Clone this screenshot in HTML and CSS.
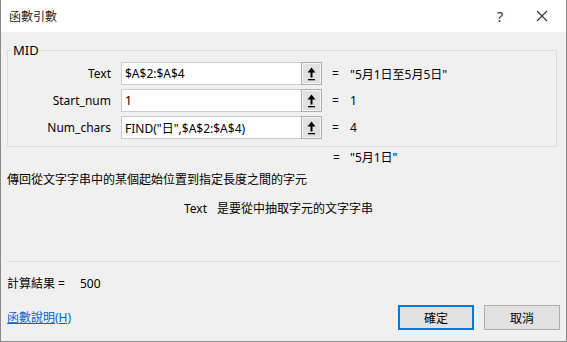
FILE: index.html
```html
<!DOCTYPE html>
<html lang="zh-Hant">
<head>
    <meta charset="utf-8">
    <title>函數引數</title>
    <link rel="stylesheet" href="styles.css">
</head>
<body>
<div class="window">
    <div class="titlebar">
        <span class="title">函數引數</span>
        <span class="help">?</span>
        <span class="close">
            <svg width="12" height="12" viewBox="0 0 12 12"><path d="M1 1L11 11M11 1L1 11" stroke="#333" stroke-width="1.1" fill="none"/></svg>
        </span>
    </div>

    <div class="content">
        <fieldset class="args">
            <legend>MID</legend>
            <div class="argRow">
                <label for="arg1">Text</label>
                <input type="text" id="arg1" value="$A$2:$A$4">
                <button class="collapse" type="button">
                    <svg width="9" height="14" viewBox="0 0 9 14"><path d="M4.5 0.5L8.5 5.5H5.5V10.5H3.5V5.5H0.5Z" fill="#000"/><rect x="1" y="12" width="7" height="1.3" fill="#000"/></svg>
                </button>
                <span class="eq">=</span>
                <span class="val">"5月1日至5月5日"</span>
            </div>
            <div class="argRow">
                <label for="arg2">Start_num</label>
                <input type="text" id="arg2" value="1">
                <button class="collapse" type="button">
                    <svg width="9" height="14" viewBox="0 0 9 14"><path d="M4.5 0.5L8.5 5.5H5.5V10.5H3.5V5.5H0.5Z" fill="#000"/><rect x="1" y="12" width="7" height="1.3" fill="#000"/></svg>
                </button>
                <span class="eq">=</span>
                <span class="val">1</span>
            </div>
            <div class="argRow">
                <label for="arg3">Num_chars</label>
                <input type="text" id="arg3" value='FIND("日",$A$2:$A$4)'>
                <button class="collapse" type="button">
                    <svg width="9" height="14" viewBox="0 0 9 14"><path d="M4.5 0.5L8.5 5.5H5.5V10.5H3.5V5.5H0.5Z" fill="#000"/><rect x="1" y="12" width="7" height="1.3" fill="#000"/></svg>
                </button>
                <span class="eq">=</span>
                <span class="val">4</span>
            </div>
        </fieldset>

        <div class="result"><span class="eq">=</span><span class="val">"5月1日"</span></div>
        <div class="desc">傳回從文字字串中的某個起始位置到指定長度之間的字元</div>
        <div class="argHelp"><span class="argName">Text</span>是要從中抽取字元的文字字串</div>

        <div class="separator"></div>

        <div class="calc">計算結果 =<span class="calcVal">500</span></div>

        <div class="footer">
            <a class="helpLink" href="#">函數說明(H)</a>
            <div class="buttons">
                <button class="btn default" type="button">確定</button>
                <button class="btn" type="button">取消</button>
            </div>
        </div>
    </div>
</div>
</body>
</html>
```

FILE: styles.css
```css
* {
    box-sizing: border-box;
}

body {
    margin: 0;
    padding: 0;
    font-family: "Noto Sans", "Noto Sans CJK TC", sans-serif;
    font-size: 12px;
    color: #000;
    background: #f0f0f0;
}

.window {
    width: 567px;
    height: 342px;
    display: flex;
    flex-direction: column;
    border: 1px solid #8a8a8a;
    border-top: none;
    background: #f0f0f0;
    overflow: hidden;
}

.titlebar {
    height: 32px;
    background: #ffffff;
    display: flex;
    align-items: center;
    padding-left: 8px;
}

.title {
    flex: 1;
    color: #222;
    font-size: 12px;
}

.help {
    width: 20px;
    text-align: center;
    font-size: 15px;
    color: #333;
    margin-right: 26px;
}

.close {
    width: 12px;
    height: 12px;
    margin-right: 18px;
    display: flex;
}

.content {
    flex: 1;
    padding: 0 6px;
    display: flex;
    flex-direction: column;
}

.args {
    margin: 10px 3px 0 0;
    padding: 4px 0 7px 0;
    border: 1px solid #dcdcdc;
    display: flex;
    flex-direction: column;
    gap: 4px;
}

.args legend {
    padding: 0 1px;
    margin-left: 4px;
    line-height: 16px;
    font-size: 13px;
}

.argRow {
    display: flex;
    align-items: center;
    height: 23px;
}

.argRow label {
    width: 103px;
    text-align: right;
    margin-right: 10px;
}

.argRow input {
    width: 180px;
    height: 23px;
    border: 1px solid #cccccc;
    border-right: none;
    background: #fff;
    padding: 0 3px;
    font-family: "Noto Sans", "Noto Sans CJK TC", sans-serif;
    font-size: 12px;
    color: #000;
    outline: none;
}

.collapse {
    width: 21px;
    height: 23px;
    padding: 0;
    border: 1px solid #adadad;
    background: #e1e1e1;
    box-shadow: inset 0 0 0 1px #f5f5f5;
    display: flex;
    align-items: center;
    justify-content: center;
}

.eq {
    margin-left: 10px;
    width: 18px;
}

.val {
    white-space: nowrap;
}

.result {
    margin-top: 3px;
    line-height: 16px;
    padding-left: 326px;
    display: flex;
}

.result .eq {
    margin-left: 0;
    width: 17px;
}

.desc {
    margin-top: 6px;
    line-height: 16px;
}

.argHelp {
    margin-top: 13px;
    line-height: 16px;
    padding-left: 177px;
}

.argName {
    margin-right: 10px;
}

.separator {
    margin-top: 44px;
    height: 1px;
    background: #dcdcdc;
}

.calc {
    margin-top: 14px;
    line-height: 16px;
}

.calcVal {
    margin-left: 15px;
}

.footer {
    margin-top: 13px;
    display: flex;
    align-items: center;
    justify-content: space-between;
}

.helpLink {
    color: #0066cc;
    text-decoration: underline;
    line-height: 16px;
}

.buttons {
    display: flex;
    gap: 10px;
}

.btn {
    width: 76px;
    height: 25px;
    border: 1px solid #adadad;
    background: #e1e1e1;
    font-family: "Noto Sans", "Noto Sans CJK TC", sans-serif;
    font-size: 12px;
    color: #000;
    padding: 0;
}

.btn.default {
    border: 1px solid #0078d7;
    box-shadow: inset 0 0 0 1px #0078d7;
}
```
